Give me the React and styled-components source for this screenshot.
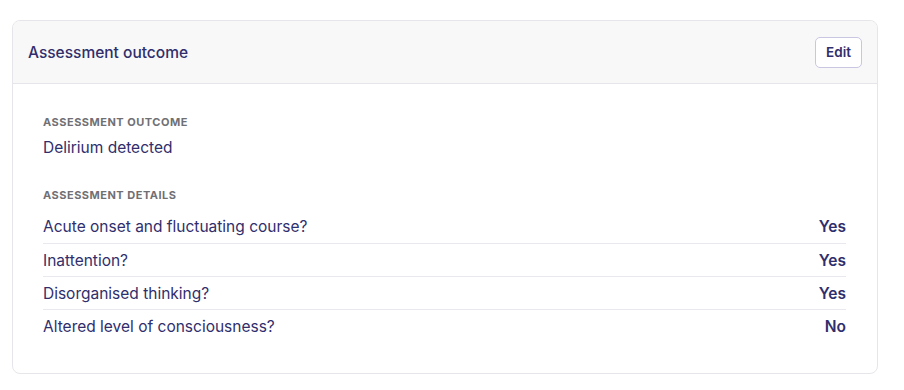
import React from 'react';
import styled, { createGlobalStyle } from 'styled-components';

const GlobalStyle = createGlobalStyle`
  body {
    margin: 0;
    background: #fff;
    font-family: Inter, "Noto Sans", sans-serif;
    color: #302e6c;
  }
`;

const Page = styled.div`
  padding: 20px 26px 16px 12px;
`;

const Card = styled.section`
  border: 1px solid #e6e6ea;
  border-radius: 8px;
  overflow: hidden;
  background: #fff;
`;

const Header = styled.header`
  display: flex;
  align-items: center;
  justify-content: space-between;
  height: 62px;
  padding: 0 15px;
  background: #f8f8f8;
  border-bottom: 1px solid #e6e6ea;
`;

const Title = styled.h2`
  margin: 0;
  font-size: 15.5px;
  font-weight: 500;
  color: #302e6c;
`;

const EditButton = styled.button`
  height: 31px;
  padding: 0 10px;
  border: 1px solid #c9c6e2;
  border-radius: 5px;
  background: #fff;
  font-family: inherit;
  font-size: 13.5px;
  font-weight: 600;
  color: #302e6c;
  cursor: pointer;
`;

const Body = styled.div`
  padding: 32px 31px 31px 30px;
`;

const Section = styled.div`
  & + & {
    margin-top: 31px;
  }
`;

const Label = styled.div`
  font-size: 11px;
  font-weight: 700;
  letter-spacing: 0.5px;
  text-transform: uppercase;
  color: #707074;
  line-height: 13px;
`;

const Value = styled.div`
  margin-top: 9px;
  font-size: 15.5px;
  line-height: 20px;
`;

const List = styled.div`
  margin-top: 8px;
`;

const Row = styled.div`
  box-sizing: border-box;
  display: flex;
  justify-content: space-between;
  align-items: center;
  height: 33px;
  font-size: 15.5px;
  & + & {
    border-top: 1px solid #e8e8ee;
  }
`;

const Answer = styled.span`
  font-weight: 600;
`;

const details = [
  ['Acute onset and fluctuating course?', 'Yes'],
  ['Inattention?', 'Yes'],
  ['Disorganised thinking?', 'Yes'],
  ['Altered level of consciousness?', 'No'],
];

export default function App() {
  return (
    <>
      <GlobalStyle />
      <Page>
        <Card>
          <Header>
            <Title>Assessment outcome</Title>
            <EditButton>Edit</EditButton>
          </Header>
          <Body>
            <Section>
              <Label>Assessment outcome</Label>
              <Value>Delirium detected</Value>
            </Section>
            <Section>
              <Label>Assessment details</Label>
              <List>
                {details.map(([q, a]) => (
                  <Row key={q}>
                    <span>{q}</span>
                    <Answer>{a}</Answer>
                  </Row>
                ))}
              </List>
            </Section>
          </Body>
        </Card>
      </Page>
    </>
  );
}
